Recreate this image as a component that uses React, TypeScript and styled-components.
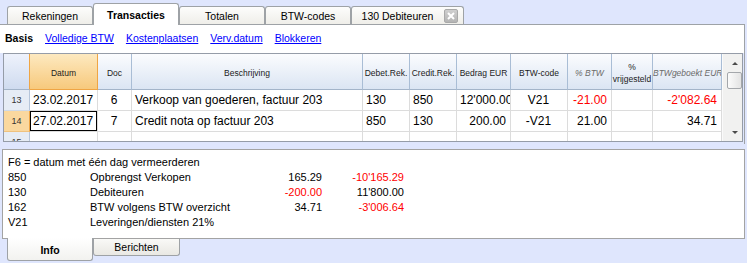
import React from 'react';
import styled, { createGlobalStyle } from 'styled-components';

const GlobalStyle = createGlobalStyle`
    html, body {
        margin: 0;
        padding: 0;
        background: #dfe6fd;
    }
    body {
        font-family: 'Liberation Sans', Arial, sans-serif;
        font-size: 11px;
        color: #000;
    }
`;

const Window = styled.div`
    width: 747px;
    height: 263px;
    overflow: hidden;
    background: #dfe6fd;
`;

const TabStrip = styled.div`
    display: flex;
    align-items: flex-end;
    height: 24px;
    padding-left: 7px;
`;

const Tab = styled.div<{ $active?: boolean; $width: number }>`
    position: relative;
    z-index: ${props => (props.$active ? 2 : 1)};
    box-sizing: border-box;
    width: ${props => props.$width}px;
    height: ${props => (props.$active ? 22 : 18)}px;
    margin-bottom: ${props => (props.$active ? -1 : 0)}px;
    display: flex;
    align-items: center;
    justify-content: center;
    padding-top: ${props => (props.$active ? 0 : 1)}px;
    border: 1px solid #9ea2a6;
    border-bottom: none;
    border-radius: 3px 3px 0 0;
    background: ${props => (props.$active ? '#fff' : 'linear-gradient(#fdfdfc, #efeee9)')};
    font-size: 10.5px;
    font-weight: ${props => (props.$active ? 'bold' : 'normal')};
    color: #000;
    white-space: nowrap;
`;

const TabLabel = styled.span<{ $shift?: number }>`
    margin-right: ${props => props.$shift || 0}px;
`;

const CloseBox = styled.span`
    position: absolute;
    right: 5px;
    top: 2px;
    width: 14px;
    height: 14px;
    box-sizing: border-box;
    border: 1px solid #a9a9a9;
    border-radius: 2px;
    background: linear-gradient(#cfcfcf, #b4b4b4);
    display: flex;
    align-items: center;
    justify-content: center;
`;

const Toolbar = styled.div`
    box-sizing: border-box;
    width: 745px;
    height: 29px;
    border-top: 1px solid #9ea2a6;
    border-right: 1px solid #9ea2a6;
    background: #fff;
    display: flex;
    align-items: center;
    gap: 12px;
    padding: 0 0 2px 5px;
    font-size: 10.5px;
`;

const ViewName = styled.span`
    font-weight: bold;
`;

const ViewLink = styled.a`
    color: #0000ff;
    text-decoration: underline;
    cursor: pointer;
`;

const GridArea = styled.div`
    box-sizing: border-box;
    width: 745px;
    padding: 0 1px 2px 3px;
    border-right: 1px solid #9ea2a6;
`;

const GridBox = styled.div`
    box-sizing: border-box;
    width: 740px;
    height: 89px;
    border: 1px solid #959ca8;
    background: #fff;
    display: flex;
`;

const Table = styled.div`
    width: 718px;
    height: 87px;
    overflow: hidden;
    display: grid;
    grid-template-columns: 26px 68px 34px 231px 47px 47px 54px 57px 44px 41px 69px;
    grid-template-rows: 36px 21px 21px 21px;
`;

const HeadCell = styled.div<{ $hl?: boolean; $edge?: boolean; $italic?: boolean; $corner?: boolean }>`
    box-sizing: border-box;
    display: flex;
    flex-direction: column;
    justify-content: center;
    padding-top: 2px;
    overflow: hidden;
    white-space: nowrap;
    text-align: center;
    font-size: 8.5px;
    line-height: 12px;
    font-style: ${props => (props.$italic ? 'italic' : 'normal')};
    color: ${props => (props.$italic ? '#6b6b6b' : '#1c1c1c')};
    border-right: 1px solid ${props => (props.$hl || props.$edge ? '#efa544' : '#a9bdd5')};
    border-bottom: 1px solid ${props => (props.$hl ? '#efa544' : '#a3b4c9')};
    background: ${props =>
        props.$hl
            ? 'linear-gradient(#fde9c0, #f7c97c)'
            : props.$corner
            ? 'linear-gradient(#eef2fc, #cfdbef)'
            : 'linear-gradient(#fbfcfe, #dbe5f3)'};
`;

const RowNum = styled.div<{ $active?: boolean }>`
    box-sizing: border-box;
    display: flex;
    align-items: center;
    justify-content: center;
    font-size: 9px;
    color: #333;
    border-right: 1px solid ${props => (props.$active ? '#efa544' : '#b5c5da')};
    border-bottom: 1px solid ${props => (props.$active ? '#efc27f' : '#cfd9e6')};
    background: ${props => (props.$active ? '#fad89f' : '#e6ecf5')};
`;

const Cell = styled.div<{ $align?: 'left' | 'right' | 'center'; $neg?: boolean; $selected?: boolean }>`
    box-sizing: border-box;
    padding: 0 4px 0 3px;
    line-height: 20px;
    font-size: 12px;
    white-space: nowrap;
    overflow: hidden;
    text-align: ${props => props.$align || 'left'};
    color: ${props => (props.$neg ? '#ff0000' : '#000')};
    border-right: 1px solid #dcdcdc;
    border-bottom: 1px solid #dcdcdc;
    box-shadow: ${props => (props.$selected ? 'inset 0 0 0 1px #000' : 'none')};
`;

const Scrollbar = styled.div`
    box-sizing: border-box;
    width: 20px;
    height: 87px;
    padding-left: 4px;
    background: #f1f1f0;
    border-left: 1px solid #fafafa;
    display: flex;
    flex-direction: column;
`;

const ScrollButton = styled.div`
    height: 18px;
    display: flex;
    align-items: center;
    justify-content: center;
`;

const Arrow = styled.span<{ $down?: boolean }>`
    width: 0;
    height: 0;
    border-left: 3px solid transparent;
    border-right: 3px solid transparent;
    ${props => (props.$down ? 'border-top' : 'border-bottom')}: 3px solid #4a4a4a;
`;

const Thumb = styled.div`
    box-sizing: border-box;
    height: 17px;
    width: 15px;
    border: 1px solid #a4a7ab;
    border-radius: 2px;
    background: linear-gradient(90deg, #fbfbfb, #e3e3e3);
`;

const Track = styled.div`
    flex: 1;
`;

const InfoPanel = styled.div`
    box-sizing: border-box;
    margin: 5px 0 0 2px;
    width: 743px;
    height: 90px;
    padding: 5px 0 0 5px;
    border: 1px solid #a3a3a3;
    background: #fff;
    font-size: 11px;
    line-height: 15px;
`;

const InfoRow = styled.div`
    display: grid;
    grid-template-columns: 82px 170px 62px 82px;
    white-space: nowrap;
`;

const Amount = styled.span<{ $neg?: boolean }>`
    text-align: right;
    color: ${props => (props.$neg ? '#ff0000' : '#000')};
`;

const BottomTabs = styled.div`
    display: flex;
    align-items: flex-start;
    padding-left: 7px;
    margin-top: -1px;
`;

const BottomTab = styled.div<{ $active?: boolean; $width: number }>`
    box-sizing: border-box;
    width: ${props => props.$width}px;
    height: ${props => (props.$active ? 23 : 18)}px;
    display: flex;
    align-items: center;
    justify-content: center;
    padding-top: ${props => (props.$active ? 2 : 0)}px;
    border: 1px solid #9ea2a6;
    border-top: ${props => (props.$active ? 'none' : '1px solid #a3a3a3')};
    border-radius: 0 0 3px 3px;
    background: ${props => (props.$active ? 'linear-gradient(#ffffff, #f2f2ef)' : 'linear-gradient(#f9f9f7, #e9e8e3)')};
    font-size: 10.5px;
    font-weight: ${props => (props.$active ? 'bold' : 'normal')};
`;

type Align = 'left' | 'right' | 'center';

interface Column {
    key: string;
    title: React.ReactNode;
    align: Align;
    numeric?: boolean;
    italic?: boolean;
}

const columns: Column[] = [
    { key: 'datum', title: 'Datum', align: 'left' },
    { key: 'doc', title: 'Doc', align: 'center' },
    { key: 'descr', title: 'Beschrijving', align: 'left' },
    { key: 'debet', title: 'Debet.Rek.', align: 'left' },
    { key: 'credit', title: 'Credit.Rek.', align: 'left' },
    { key: 'bedrag', title: 'Bedrag EUR', align: 'right', numeric: true },
    { key: 'code', title: 'BTW-code', align: 'center' },
    { key: 'pct', title: '% BTW', align: 'right', numeric: true, italic: true },
    {
        key: 'vrij',
        title: (
            <>
                <div>%</div>
                <div>vrijgesteld</div>
            </>
        ),
        align: 'right',
        numeric: true,
    },
    { key: 'geboekt', title: 'BTWgeboekt EUR', align: 'right', numeric: true, italic: true },
];

type Row = Record<string, string> & { n: string };

const rows: Row[] = [
    {
        n: '13',
        datum: '23.02.2017',
        doc: '6',
        descr: 'Verkoop van goederen, factuur 203',
        debet: '130',
        credit: '850',
        bedrag: "12'000.00",
        code: 'V21',
        pct: '-21.00',
        vrij: '',
        geboekt: "-2'082.64",
    },
    {
        n: '14',
        datum: '27.02.2017',
        doc: '7',
        descr: 'Credit nota op factuur 203',
        debet: '850',
        credit: '130',
        bedrag: '200.00',
        code: '-V21',
        pct: '21.00',
        vrij: '',
        geboekt: '34.71',
    },
    { n: '15' },
];

const activeRow = '14';

const infoLines = [
    ['850', 'Opbrengst Verkopen', '165.29', "-10'165.29"],
    ['130', 'Debiteuren', '-200.00', "11'800.00"],
    ['162', 'BTW volgens BTW overzicht', '34.71', "-3'006.64"],
    ['V21', 'Leveringen/diensten 21%', '', ''],
];

const tabs = [
    { label: 'Rekeningen', width: 86 },
    { label: 'Transacties', width: 86, active: true },
    { label: 'Totalen', width: 86 },
    { label: 'BTW-codes', width: 86 },
    { label: '130 Debiteuren', width: 113, closable: true },
];

const links = ['Volledige BTW', 'Kostenplaatsen', 'Verv.datum', 'Blokkeren'];

const App = () => (
    <Window>
        <GlobalStyle />
        <TabStrip>
            {tabs.map(tab => (
                <Tab key={tab.label} $active={tab.active} $width={tab.width}>
                    <TabLabel $shift={tab.closable ? 20 : 0}>{tab.label}</TabLabel>
                    {tab.closable && (
                        <CloseBox>
                            <svg width="8" height="8" viewBox="0 0 8 8">
                                <path d="M1 1 L7 7 M7 1 L1 7" stroke="#fff" strokeWidth="2" />
                            </svg>
                        </CloseBox>
                    )}
                </Tab>
            ))}
        </TabStrip>
        <Toolbar>
            <ViewName>Basis</ViewName>
            {links.map(link => (
                <ViewLink key={link}>{link}</ViewLink>
            ))}
        </Toolbar>
        <GridArea>
            <GridBox>
                <Table>
                    <HeadCell $corner $edge />
                    {columns.map(col => (
                        <HeadCell key={col.key} $hl={col.key === 'datum'} $italic={col.italic}>
                            {typeof col.title === 'string' ? <div>{col.title}</div> : col.title}
                        </HeadCell>
                    ))}
                    {rows.map(row => (
                        <React.Fragment key={row.n}>
                            <RowNum $active={row.n === activeRow}>{row.n}</RowNum>
                            {columns.map(col => {
                                const value = row[col.key] || '';
                                return (
                                    <Cell
                                        key={col.key}
                                        $align={col.align}
                                        $neg={col.numeric && value.startsWith('-')}
                                        $selected={row.n === activeRow && col.key === 'datum'}
                                    >
                                        {value}
                                    </Cell>
                                );
                            })}
                        </React.Fragment>
                    ))}
                </Table>
                <Scrollbar>
                    <ScrollButton>
                        <Arrow />
                    </ScrollButton>
                    <Thumb />
                    <Track />
                    <ScrollButton>
                        <Arrow $down />
                    </ScrollButton>
                </Scrollbar>
            </GridBox>
        </GridArea>
        <InfoPanel>
            <div>F6 = datum met één dag vermeerderen</div>
            {infoLines.map(([code, name, amount, balance]) => (
                <InfoRow key={code}>
                    <span>{code}</span>
                    <span>{name}</span>
                    <Amount $neg={amount.startsWith('-')}>{amount}</Amount>
                    <Amount $neg={balance.startsWith('-')}>{balance}</Amount>
                </InfoRow>
            ))}
        </InfoPanel>
        <BottomTabs>
            <BottomTab $active $width={86}>
                Info
            </BottomTab>
            <BottomTab $width={87}>Berichten</BottomTab>
        </BottomTabs>
    </Window>
);

export default App;
